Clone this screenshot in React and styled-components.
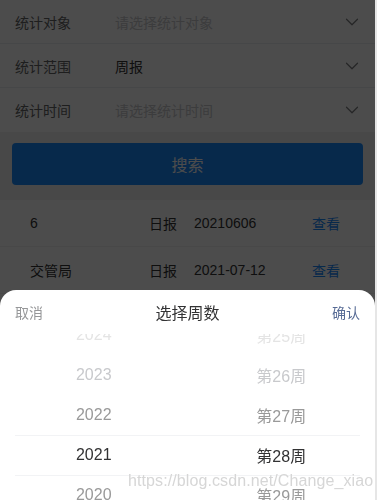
import React from "react";
import styled, { createGlobalStyle } from "styled-components";
import { ChevronDown } from "lucide-react";

const GlobalStyle = createGlobalStyle`
  html, body {
    margin: 0;
    padding: 0;
    background: #e6e6e6;
    font-family: "Liberation Sans", Arial, "Noto Sans CJK SC", sans-serif;
  }
`;

const Page = styled.div`
  width: 375px;
  min-height: 500px;
  background: #f2f2f2;
  position: relative;
  overflow: hidden;
`;

const Form = styled.div`
  background: #fff;
`;

const Cell = styled.div`
  display: flex;
  align-items: center;
  height: 44px;
  padding: 0 16px 0 15px;
  font-size: 14px;
  box-sizing: border-box;
  border-bottom: ${(p) => (p.last ? "none" : "1px solid #ebedf0")};
`;

const Label = styled.div`
  width: 100px;
  color: #646566;
`;

const Value = styled.div`
  flex: 1;
  color: ${(p) => (p.placeholder ? "#c8c9cc" : "#323233")};
`;

const Arrow = styled(ChevronDown)`
  color: #7d7e80;
  margin-right: -4px;
`;

const SearchBand = styled.div`
  padding: 11px 12px 15px;
`;

const SearchButton = styled.button`
  display: block;
  width: 100%;
  height: 42px;
  border: none;
  border-radius: 4px;
  background: #1989fa;
  color: #fff;
  font-size: 16px;
  font-family: inherit;
`;

const List = styled.div`
  background: #fff;
`;

const Row = styled.div`
  display: grid;
  grid-template-columns: 119px 45px 118px 1fr;
  align-items: center;
  height: 46px;
  padding-left: 30px;
  font-size: 14px;
  color: #323233;
  border-bottom: 1px solid #f0f0f0;
`;

const Link = styled.span`
  color: #1989fa;
`;

const Overlay = styled.div`
  position: fixed;
  left: 0;
  top: 0;
  width: 375px;
  height: 100%;
  background: rgba(0, 0, 0, 0.7);
`;

const Popup = styled.div`
  position: fixed;
  left: 0;
  bottom: 0;
  width: 375px;
  height: 210px;
  background: #fff;
  border-radius: 16px 16px 0 0;
  overflow: hidden;
`;

const Toolbar = styled.div`
  display: flex;
  align-items: center;
  justify-content: space-between;
  height: 44px;
  padding: 0 15px;
  font-size: 14px;
`;

const Cancel = styled.span`
  color: #969799;
`;

const Confirm = styled.span`
  color: #576b95;
`;

const Title = styled.span`
  color: #323233;
  font-size: 16px;
`;

const Columns = styled.div`
  position: relative;
  display: grid;
  grid-template-columns: 1fr 1fr;
  height: 166px;
  overflow: hidden;
`;

const Column = styled.div`
  transform: translateY(-19px);
`;

const Item = styled.div`
  height: 40px;
  display: flex;
  align-items: center;
  justify-content: center;
  font-size: 16px;
  color: ${(p) => p.color};
`;

const Frame = styled.div`
  position: absolute;
  left: 15px;
  right: 15px;
  top: 101px;
  height: 39px;
  border-top: 1px solid #f2f3f5;
  border-bottom: 1px solid #f2f3f5;
  pointer-events: none;
`;

const Watermark = styled.div`
  position: fixed;
  left: 128px;
  bottom: 10px;
  font-size: 16px;
  letter-spacing: 0.1px;
  color: rgba(200, 200, 200, 0.75);
  text-shadow: 0 0 1px #fff;
  pointer-events: none;
`;

const shades = ["#e4e4e4", "#c8c9cc", "#999", "#323233", "#999"];
const years = ["2024", "2023", "2022", "2021", "2020"];
const weeks = ["第25周", "第26周", "第27周", "第28周", "第29周"];

export default function App() {
  return (
    <>
      <GlobalStyle />
      <Page>
        <Form>
          <Cell>
            <Label>统计对象</Label>
            <Value placeholder="1">请选择统计对象</Value>
            <Arrow size={22} strokeWidth={1.3} />
          </Cell>
          <Cell>
            <Label>统计范围</Label>
            <Value>周报</Value>
            <Arrow size={22} strokeWidth={1.3} />
          </Cell>
          <Cell last>
            <Label>统计时间</Label>
            <Value placeholder="1">请选择统计时间</Value>
            <Arrow size={22} strokeWidth={1.3} />
          </Cell>
        </Form>
        <SearchBand>
          <SearchButton>搜索</SearchButton>
        </SearchBand>
        <List>
          <Row>
            <span>6</span>
            <span>日报</span>
            <span>20210606</span>
            <Link>查看</Link>
          </Row>
          <Row>
            <span>交管局</span>
            <span>日报</span>
            <span>2021-07-12</span>
            <Link>查看</Link>
          </Row>
          <Row>
            <span>交管局</span>
            <span>周报</span>
            <span>2021-07-12</span>
            <Link>查看</Link>
          </Row>
        </List>
        <Overlay />
        <Popup>
          <Toolbar>
            <Cancel>取消</Cancel>
            <Title>选择周数</Title>
            <Confirm>确认</Confirm>
          </Toolbar>
          <Columns>
            <Column>
              {years.map((y, i) => (
                <Item key={y} color={shades[i]}>{y}</Item>
              ))}
            </Column>
            <Column>
              {weeks.map((w, i) => (
                <Item key={w} color={shades[i]}>{w}</Item>
              ))}
            </Column>
            <Frame />
          </Columns>
        </Popup>
        <Watermark>https://blog.csdn.net/Change_xiao</Watermark>
      </Page>
    </>
  );
}
